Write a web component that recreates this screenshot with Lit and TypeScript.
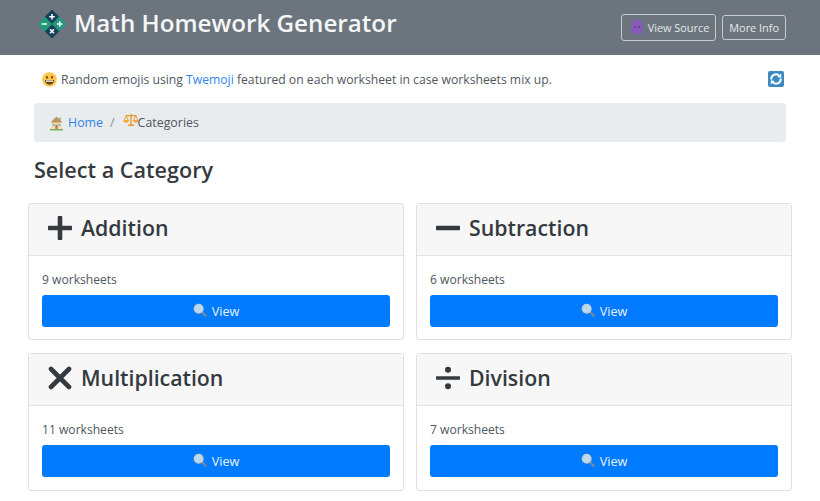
import { LitElement, html, css, svg } from "lit";
import { customElement } from "lit/decorators.js";

const logo = html`<svg class="logo" viewBox="0 0 30 30" aria-hidden="true">
  <path d="M15 .5 22.2 7.700 15 15 7.800 7.700Z" fill="#15405a"/>
  <path d="M15 15 22.200 22.300 15 29.500 7.800 22.300Z" fill="#15405a"/>
  <path d="M7.700 7.800 15 15 7.700 22.200.5 15Z" fill="#1f9a7c"/>
  <path d="M22.300 7.800 29.500 15 22.300 22.200 15 15Z" fill="#1f9a7c"/>
  <path d="M15 5v5.400M12.300 7.700h5.400M4.600 15h5.400M20 15h5.400M22.700 12.300v5.400M13 20.300l4 4M17 20.300l-4 4" stroke="#fff" stroke-width="1.500" fill="none"/>
</svg>`;

const smile = html`<svg class="smile" viewBox="0 0 16 16" aria-hidden="true">
  <circle cx="8" cy="8" r="7.800" fill="#fbc44e"/>
  <ellipse cx="5.300" cy="5.800" rx="1" ry="1.500" fill="#664500"/>
  <ellipse cx="10.700" cy="5.800" rx="1" ry="1.500" fill="#664500"/>
  <path d="M3.200 8.600h9.600c0 3-2.200 5-4.800 5s-4.800-2-4.800-5Z" fill="#664500"/>
  <path d="M4.200 9h7.600v1.400H4.200Z" fill="#fff"/>
</svg>`;

const sync = html`<svg class="sync" viewBox="0 0 16 16" aria-hidden="true">
  <rect width="16" height="16" rx="2" fill="#3b88c3"/>
  <path d="M3.300 8.500A4.700 4.700 0 0 1 11 4.400M12.700 7.500A4.700 4.700 0 0 1 5 11.600" stroke="#fff" stroke-width="2" fill="none"/>
  <path d="M13.300 2.600 13.200 6.800 9.200 6ZM2.700 13.400 2.800 9.200 6.800 10Z" fill="#fff"/>
</svg>`;

const house = html`<svg class="house" viewBox="0 0 16 16" aria-hidden="true">
  <path d="M1 14.300h14V16H1Z" fill="#77b255"/>
  <path d="M3 6.500h10v7.800H3Z" fill="#f2dca6"/>
  <path d="M8 1 14.500 7.500H1.500Z" fill="#b89660"/>
  <path d="M11 2h1.500v3.500H11Z" fill="#b89660"/>
  <path d="M6.800 10h2.400v4.300H6.800Z" fill="#c1694f"/>
  <path d="M4 9h2v2H4ZM10 9h2v2h-2Z" fill="#55acee"/>
</svg>`;

const scales = html`<svg class="scales" viewBox="0 0 18 16" aria-hidden="true">
  <path d="M9 1v12M3 3h12M5.500 14h7" stroke="#e39a2c" stroke-width="1.600" fill="none"/>
  <path d="M3.500 3 1 8.500h5ZM14.500 3 12 8.500h5Z" fill="none" stroke="#e39a2c" stroke-width="1"/>
  <path d="M.3 8h6.400a3.200 3.200 0 0 1-6.400 0ZM11.300 8h6.400a3.200 3.200 0 0 1-6.400 0Z" fill="#f4a83a"/>
</svg>`;

const octopus = html`<svg class="octopus" viewBox="0 0 14 16" aria-hidden="true">
  <path d="M7 .5c3.500 0 5 2.400 5 5.300 0 2.800.6 5 2 7.700l-2.300-.8.200 2.800-2.300-1.700-.8 2.200L7 13.700 5.200 16l-.8-2.200-2.300 1.700.2-2.800-2.300.8c1.400-2.700 2-4.900 2-7.700C2 2.900 3.500.5 7 .5Z" fill="#8a58b8"/>
  <circle cx="5" cy="8" r=".8" fill="#3e2560"/><circle cx="9" cy="8" r=".8" fill="#3e2560"/>
</svg>`;

const lens = html`<svg class="lens" viewBox="0 0 16 16" aria-hidden="true">
  <path d="M10 10l4.500 4.500" stroke="#7f8a93" stroke-width="2.400" stroke-linecap="round"/>
  <circle cx="6.500" cy="6.500" r="5" fill="#bcd9ee" stroke="#c3ccd3" stroke-width="1.500"/>
</svg>`;

const ops: Record<string, unknown> = {
  add: svg`<path d="M12 1.500v21M1.500 12h21" stroke="#343a40" stroke-width="4.600" stroke-linecap="round"/>`,
  sub: svg`<path d="M1.500 12h21" stroke="#343a40" stroke-width="4.600" stroke-linecap="round"/>`,
  mul: svg`<path d="M3 3l18 18M21 3 3 21" stroke="#343a40" stroke-width="4.600" stroke-linecap="round"/>`,
  div: svg`<path d="M1 12h22" stroke="#343a40" stroke-width="3.400" stroke-linecap="round"/><circle cx="12" cy="3.800" r="3" fill="#343a40"/><circle cx="12" cy="20.200" r="3" fill="#343a40"/>`,
};

const categories = [
  { name: "Addition", op: "add", count: 9 },
  { name: "Subtraction", op: "sub", count: 6 },
  { name: "Multiplication", op: "mul", count: 11 },
  { name: "Division", op: "div", count: 7 },
];

@customElement("app-root")
export class AppRoot extends LitElement {
  static styles = css`
    :host {
      display: block;
      font-family: "Open Sans", "Noto Sans", sans-serif;
      color: #495057;
      background: #fff;
      height: 501px;
      overflow: hidden;
    }
    svg { display: block; flex: none; }
    a { color: #2f86e8; text-decoration: none; }
    .nav {
      height: 55px;
      box-sizing: border-box;
      background: #6c757d;
      display: flex;
      align-items: center;
      padding: 0 34px 0 37px;
    }
    .brand {
      display: flex;
      align-items: center;
      gap: 7px;
      margin-top: -8px;
      color: #f4f6f7;
      font-size: 24.200px;
      font-weight: 600;
    }
    .brand span { margin-top: -2px; }
    .logo { width: 30px; height: 30px; }
    .nav-buttons {
      margin-left: auto;
      display: flex;
      align-items: center;
      gap: 6px;
      margin-top: -1px;
    }
    .btn-outline {
      display: flex;
      align-items: center;
      gap: 4px;
      box-sizing: border-box;
      border: 1px solid #c5cacd;
      border-radius: 3px;
      color: #e6e8ea;
      font-size: 10.900px;
      padding: 0 6px;
    }
    .source { height: 27px; padding-left: 8px; }
    .info { height: 25px; margin-top: 1px; }
    .octopus { width: 14px; height: 16px; }
    .notice {
      display: flex;
      align-items: center;
      height: 48px;
      padding: 0 36px 0 42px;
      font-size: 12.180px;
      color: #50575e;
    }
    .smile { width: 15px; height: 15px; margin-right: 4px; }
    .sync { width: 16px; height: 16px; margin-left: auto; }
    .crumbs {
      display: flex;
      align-items: center;
      box-sizing: border-box;
      height: 39px;
      margin: 0 34px;
      padding: 0 15px;
      background: #e9ecef;
      border-radius: 3px;
      font-size: 12.400px;
      color: #50575e;
    }
    .house { width: 15px; height: 16px; margin-right: 4px; }
    .scales { width: 16px; height: 14px; margin: -5px -1px 0 0; }
    .sep { color: #8a9299; margin: 0 8px 0 7px; }
    h1 {
      margin: 0;
      padding: 14px 34px 0;
      height: 46px;
      box-sizing: border-box;
      font-size: 21.600px;
      line-height: 28px;
      font-weight: 600;
      color: #343a40;
    }
    .grid {
      display: grid;
      grid-template-columns: 376px 376px;
      column-gap: 12px;
      row-gap: 13px;
      margin: 15px 0 0 28px;
    }
    .card {
      box-sizing: border-box;
      height: 137px;
      border: 1px solid #dfdfdf;
      border-radius: 3px;
      background: #fff;
      display: flex;
      flex-direction: column;
    }
    .card:nth-child(n + 3) { height: 138px; }
    .card-head {
      box-sizing: border-box;
      height: 52px;
      flex: none;
      display: flex;
      align-items: center;
      gap: 9px;
      padding: 0 19px;
      background: #f7f7f7;
      border-bottom: 1px solid #e3e3e3;
      font-size: 21.300px;
      font-weight: 600;
      color: #343a40;
    }
    .card-head span { margin-top: -4px; }
    .op { width: 24px; height: 24px; margin-top: -3px; }
    .card-body {
      flex: 1;
      padding: 0 13px;
      display: flex;
      flex-direction: column;
    }
    .count {
      height: 39px;
      display: flex;
      align-items: center;
      padding-top: 7px;
      box-sizing: border-box;
      font-size: 12.100px;
      color: #50575e;
    }
    .view {
      height: 32px;
      display: flex;
      align-items: center;
      justify-content: center;
      gap: 5px;
      background: #007bff;
      border-radius: 3px;
      color: #e8f2ff;
      font-size: 12.700px;
    }
    .view span { margin-top: -1px; }
    .lens { width: 14px; height: 14px; margin-top: -2px; }
  `;

  render() {
    return html`
      <div class="nav">
        <div class="brand">${logo}<span>Math Homework Generator</span></div>
        <div class="nav-buttons">
          <div class="btn-outline source">${octopus}<span>View Source</span></div>
          <div class="btn-outline info">More Info</div>
        </div>
      </div>
      <div class="notice">
        ${smile}
        <span>Random emojis using <a>Twemoji</a> featured on each worksheet in case worksheets mix up.</span>
        ${sync}
      </div>
      <div class="crumbs">
        ${house}<a>Home</a><span class="sep">/</span>${scales}<span>Categories</span>
      </div>
      <h1>Select a Category</h1>
      <div class="grid">
        ${categories.map(
          (c) => html`<div class="card">
            <div class="card-head">
              <svg class="op" viewBox="0 0 24 24" aria-hidden="true">${ops[c.op]}</svg>
              <span>${c.name}</span>
            </div>
            <div class="card-body">
              <div class="count">${c.count} worksheets</div>
              <div class="view">${lens}<span>View</span></div>
            </div>
          </div>`
        )}
      </div>
    `;
  }
}
